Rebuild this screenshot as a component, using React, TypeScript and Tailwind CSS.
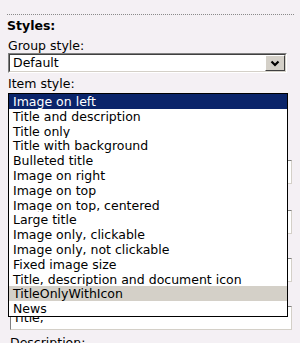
const items = [
  'Image on left',
  'Title and description',
  'Title only',
  'Title with background',
  'Bulleted title',
  'Image on right',
  'Image on top',
  'Image on top, centered',
  'Large title',
  'Image only, clickable',
  'Image only, not clickable',
  'Fixed image size',
  'Title, description and document icon',
  'TitleOnlyWithIcon',
  'News',
];

const InsetBox = ({ className = '', children }: { className?: string; children?: React.ReactNode }) => (
  <div className={`border border-t-[#808080] border-l-[#808080] border-r-[#d4d0c8] border-b-[#d4d0c8] bg-white ${className}`}>
    {children}
  </div>
);

export default function App() {
  return (
    <div className="w-[300px] h-[343px] overflow-hidden bg-[#f4f0f4] text-black font-['DejaVu_Sans','Verdana',sans-serif] text-[12.5px]">
      <div className="pt-[14px] pl-[7px] pr-[8px]">
        <div className="h-0 border-t border-dotted border-[#8a8a8a] mr-[-2px]" />
        <div className="mt-[3px] font-bold leading-[15px]">Styles:</div>
        <div className="mt-[6px] pl-[1px] leading-[14px]">Group style:</div>

        <div className="ml-[1px] w-[279px] h-[20px] flex border border-t-[#808080] border-l-[#808080] border-r-white border-b-white">
          <div className="flex-1 flex border border-t-[#404040] border-l-[#404040] border-r-[#d4d0c8] border-b-[#d4d0c8] bg-white">
            <div className="flex-1 pl-[3px] leading-[16px]">Default</div>
            <div className="w-[20px] h-full flex items-center justify-center bg-[#d4d0c8] border border-t-white border-l-white border-r-[#404040] border-b-[#404040]">
              <svg width="10" height="7" viewBox="0 0 10 7">
                <polyline points="1.5,1.5 5,5 8.5,1.5" fill="none" stroke="#000" strokeWidth="2.2" />
              </svg>
            </div>
          </div>
        </div>

        <div className="mt-[3px] pl-[1px] leading-[15px]">Item style:</div>

        <div className="relative mt-[2px]">
          {/* fields hidden under the open list */}
          <div className="flex flex-col">
            <InsetBox className="ml-[1px] w-[280px] h-[20px]" />
            <div className="h-[47px]" />
            <InsetBox className="ml-[3px] w-[282px] h-[24px]" />
            <div className="h-[26px]" />
            <InsetBox className="ml-[3px] w-[282px] h-[24px]" />
            <div className="h-[24px]" />
            <InsetBox className="ml-[3px] w-[282px] h-[24px]" />
            <div className="h-[24px]" />
            <InsetBox className="ml-[3px] w-[282px] h-[24px] pl-[2px] pt-[2px] leading-[18px]">Title,</InsetBox>
            <div className="mt-[5px] pl-[3px] leading-[15px]">Description:</div>
          </div>

          <div className="absolute top-0 left-[1px] w-[280px] border border-black bg-white">
            {items.map((item, i) => (
              <div
                key={item}
                className={`h-[14.8px] leading-[15px] pl-[4px] whitespace-nowrap overflow-hidden ${
                  i === 0 ? 'bg-[#0a246a] text-white' : i === 13 ? 'bg-[#d4d0c8]' : ''
                }`}
              >
                {item}
              </div>
            ))}
          </div>
        </div>
      </div>
    </div>
  );
}
